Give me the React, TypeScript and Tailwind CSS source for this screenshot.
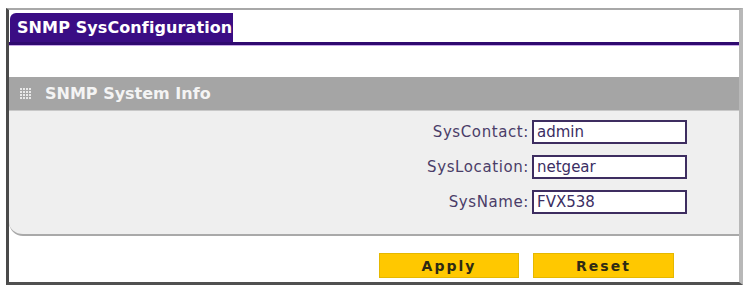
import React from "react";

const font = { fontFamily: '"DejaVu Sans", Verdana, sans-serif' };

function GridIcon() {
  const dots = [];
  for (let r = 0; r < 4; r++)
    for (let c = 0; c < 4; c++)
      dots.push(<rect key={`${r}-${c}`} x={c * 3} y={r * 3} width={2} height={2} fill="#e8e8e8" />);
  return (
    <svg width="12" height="12" viewBox="0 0 12 12">
      {dots}
    </svg>
  );
}

function Field({ label, value }: { label: string; value: string }) {
  return (
    <div className="flex items-center justify-end gap-[3px]">
      <span className="text-[15px] tracking-[0.6px] text-[#4a3d68]">{label}</span>
      <div className="w-[155px] h-[24px] border-2 border-[#3d2d60] bg-white flex items-center pl-[3px] text-[15px] text-[#3b2e63] leading-none">
        {value}
      </div>
    </div>
  );
}

export default function App() {
  return (
    <div className="w-[746px] h-[287px] bg-white overflow-hidden" style={font}>
      <div className="ml-[6px] mt-[8px] w-[737px] h-[277px] border-l-[3px] border-l-[#4a4a4a] border-t-[2px] border-t-[#a8a8a8] border-r-[4px] border-r-[#b8b8b8] border-b-[3px] border-b-[#505050] flex flex-col">
        {/* Tab row */}
        <div className="pt-[3px] pl-[1px]">
          <div className="w-[223px] h-[29px] bg-[#3a0d84] rounded-tl-[6px] flex items-center pl-[7px] pt-[1px]">
            <span className="text-white font-bold text-[16px] tracking-[0.1px] leading-none whitespace-nowrap">SNMP SysConfiguration</span>
          </div>
        </div>
        <div className="h-[3px] bg-[#2f0a70]" />
        <div className="h-[1px] bg-[#c9a8e8]" />
        <div className="h-[31px] bg-white" />
        {/* Section header */}
        <div className="h-[34px] bg-[#a5a5a5] flex items-center pl-[11px] gap-[13px] border-b border-b-[#c8c8c8]">
          <GridIcon />
          <span className="text-[#f4f4f4] font-bold text-[16px] leading-none">SNMP System Info</span>
        </div>
        {/* Panel */}
        <div className="h-[125px] bg-[#efefef] rounded-bl-[14px] border-b-2 border-b-[#a9a9a9] flex flex-col pt-[9px] gap-[11px] pr-[52px]">
          <Field label="SysContact:" value="admin" />
          <Field label="SysLocation:" value="netgear" />
          <Field label="SysName:" value="FVX538" />
        </div>
        {/* Buttons */}
        <div className="flex justify-end gap-[14px] pr-[65px] pt-[17px]">
          <button className="w-[140px] h-[25px] bg-[#ffc800] border border-[#e5b800] text-[#2e2a14] font-bold text-[14px] tracking-[2px] leading-none">
            Apply
          </button>
          <button className="w-[141px] h-[25px] bg-[#ffc800] border border-[#e5b800] text-[#2e2a14] font-bold text-[14px] tracking-[2px] leading-none">
            Reset
          </button>
        </div>
      </div>
    </div>
  );
}
